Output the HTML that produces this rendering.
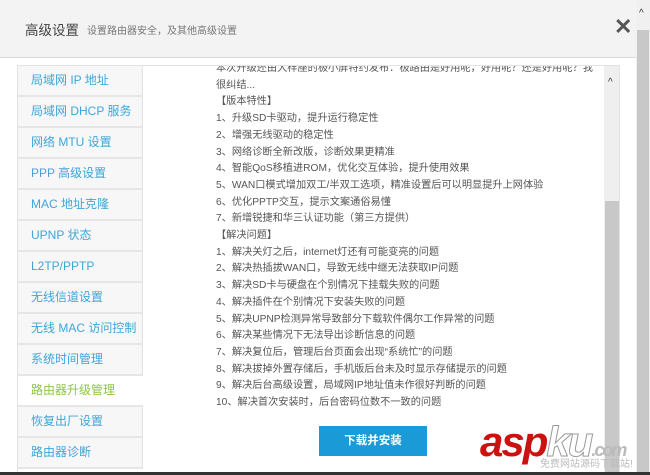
<!DOCTYPE html>
<html><head><meta charset="utf-8"><style>
*{margin:0;padding:0;box-sizing:border-box}
body{width:650px;height:475px;overflow:hidden;background:#fff;font-family:"Liberation Sans","Noto Sans CJK SC",sans-serif;position:relative}
.hdr{position:absolute;left:0;top:0;width:636px;height:58px;background:#f3f3f3;border-bottom:1px solid #dcdcdc}
.t1{position:absolute;left:25px;top:19px;font-size:13.5px;color:#444}
.t2{position:absolute;left:87px;top:22px;font-size:10px;color:#777}
.x{position:absolute;left:614px;top:14px;font-size:22px;color:#555;font-weight:bold}
.osb{position:absolute;left:636px;top:0;width:14px;height:475px;background:#f0f0f0}
.osb .th{position:absolute;left:1px;top:30px;width:12px;height:445px;background:#c8c8c8}
.osb .ar{position:absolute;left:3px;top:8px;font-size:10px;color:#333}
.panel{position:absolute;left:17px;top:65px;width:603px;height:410px;border:1px solid #e3e3e3;border-bottom:none;overflow:hidden}
.side{position:absolute;left:0;top:0;width:125px}
.side div{height:31px;background:#f7f7f7;border-bottom:2px solid #e6e6e6;border-right:1px solid #e3e3e3;color:#3ea5d9;font-size:12px;line-height:29px;padding-left:13px}
.side div.on{background:#fff;color:#8cc63f;border-right:none}
.content{position:absolute;left:198px;top:-5px;font-size:10.2px;color:#555;line-height:16.7px;width:390px}
.isb{position:absolute;left:586px;top:0;width:16px;height:410px;background:#efefef}
.isb .th{position:absolute;left:1px;top:135px;width:14px;height:280px;background:#c8c8c8}
.isb .ar{position:absolute;left:4px;top:11px;font-size:10px;color:#333}
.btn{position:absolute;left:319px;top:426px;width:108px;height:30px;background:#1a9ad6;color:#fff;font-size:11.5px;font-weight:bold;text-align:center;line-height:30px}
.wm{position:absolute;left:480px;top:418px;font-size:42px;font-style:italic;font-weight:bold;color:#cc1111;letter-spacing:-2px}
.wm .k{color:#fff;-webkit-text-stroke:1px #999}
.wm2{position:absolute;left:540px;top:455px;font-size:10px;color:#bbb}
.bot{position:absolute;left:0;top:472px;width:650px;height:3px;background:#333}
</style></head><body>
<div class="hdr"><span class="t1">高级设置</span><span class="t2">设置路由器安全，及其他高级设置</span><span class="x">✕</span></div>
<div class="osb"><div class="th"></div><div class="ar">^</div></div>
<div class="panel">
<div class="side">
<div>局域网 IP 地址</div><div>局域网 DHCP 服务</div><div>网络 MTU 设置</div><div>PPP 高级设置</div><div>MAC 地址克隆</div><div>UPNP 状态</div><div>L2TP/PPTP</div><div>无线信道设置</div><div>无线 MAC 访问控制</div><div>系统时间管理</div><div class="on">路由器升级管理</div><div>恢复出厂设置</div><div>路由器诊断</div>
</div>
<div class="content">本次升级还由大样座的极小屏特约发布：极路由是好用呢，好用呢？还是好用呢？我<br>很纠结...<br>【版本特性】<br>1、升级SD卡驱动，提升运行稳定性<br>2、增强无线驱动的稳定性<br>3、网络诊断全新改版，诊断效果更精准<br>4、智能QoS移植进ROM，优化交互体验，提升使用效果<br>5、WAN口模式增加双工/半双工选项，精准设置后可以明显提升上网体验<br>6、优化PPTP交互，提示文案通俗易懂<br>7、新增锐捷和华三认证功能（第三方提供）<br>【解决问题】<br>1、解决关灯之后，internet灯还有可能变亮的问题<br>2、解决热插拔WAN口，导致无线中继无法获取IP问题<br>3、解决SD卡与硬盘在个别情况下挂载失败的问题<br>4、解决插件在个别情况下安装失败的问题<br>5、解决UPNP检测异常导致部分下载软件偶尔工作异常的问题<br>6、解决某些情况下无法导出诊断信息的问题<br>7、解决复位后，管理后台页面会出现“系统忙”的问题<br>8、解决拔掉外置存储后，手机版后台未及时显示存储提示的问题<br>9、解决后台高级设置，局域网IP地址值未作很好判断的问题<br>10、解决首次安装时，后台密码位数不一致的问题</div>
<div class="isb"><div class="th"></div><div class="ar">^</div></div>
</div>
<div class="btn">下载并安装</div>
<div class="wm">asp<span class="k">ku</span><span style="font-size:18px;color:#bbb">.com</span></div>
<div class="wm2">免费网站源码下载站!</div>
<div class="bot"></div>
</body></html>
